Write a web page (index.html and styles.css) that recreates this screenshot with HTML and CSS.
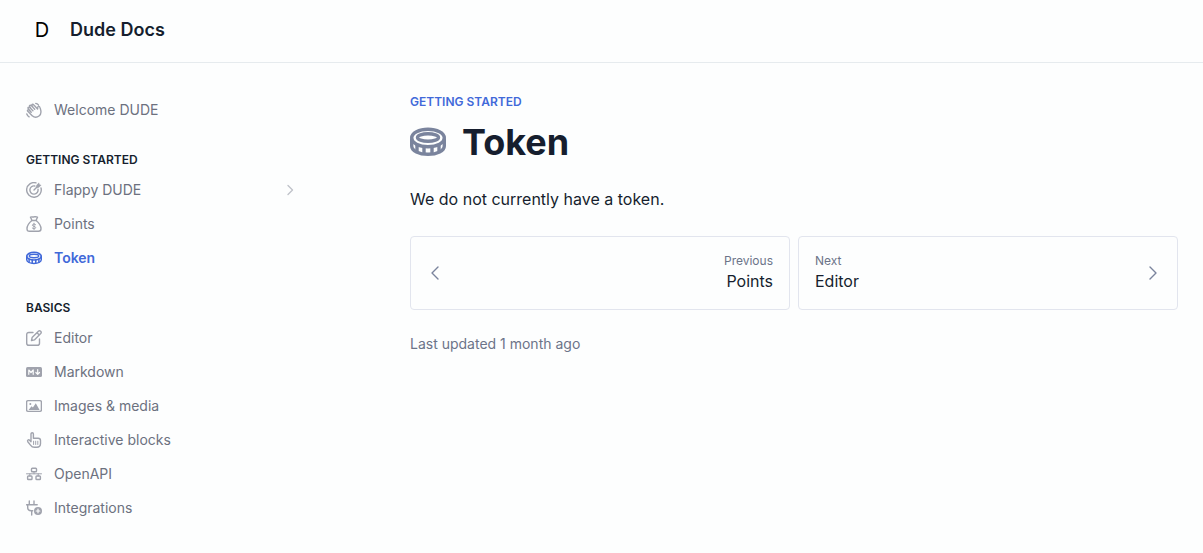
FILE: index.html
```html
<!DOCTYPE html>
<html lang="en">
<head>
    <meta charset="utf-8">
    <meta name="viewport" content="width=device-width, initial-scale=1">
    <title>Token - Dude Docs</title>
    <link rel="stylesheet" href="styles.css">
</head>
<body>
    <header class="header">
        <a class="brand" href="#">
            <span class="logo">D</span>
            <span class="brand-name">Dude Docs</span>
        </a>
    </header>

    <!-- shared by the sidebar and the page title -->
    <svg class="sprite" aria-hidden="true">
        <symbol id="coin" viewBox="0 0 36 36">
            <path d="M1.7 14.500v7.500c0 4.800 7.200 8.300 16.300 8.300s16.300-3.500 16.300-8.300v-7.500"/>
            <ellipse cx="18" cy="14" rx="16.300" ry="8.700"/>
            <ellipse cx="18" cy="13.500" rx="10.500" ry="3.700"/>
            <path d="M7 20v7M14 22.500v7M22 22.500v7M29 20v7"/>
        </symbol>
    </svg>

    <div class="layout">
        <nav class="sidebar">
            <ul>
                <li><a href="#">
                    <svg class="icon" viewBox="0 0 16 16"><path d="M6.200 13.800 1.800 9.300C1 8.400 2.100 7.300 3 8.100l2.200 2.200M5.200 10.300 2.300 6.700c-.8-1 .5-2.100 1.400-1.200l3.200 3.300M5.300 7.200 3.700 4.700c-.7-1.100.8-2 1.600-1.100l3.400 3.700M6.900 5.200 6 3.700C5.400 2.500 6.800 1.800 7.600 2.700l4 4.200c.2-1.200-.1-2.700 1-2.800 1.300-.1 1.500 1.800 2 3.500.8 2.800.2 5-1.600 6.400-2.100 1.600-4.800 1.500-6.800-.2M9.800 1.400c1.100.2 1.900.7 2.600 1.500M.8 12c.4 1.300 1.200 2.200 2.300 2.800"/></svg>
                    Welcome DUDE</a></li>
            </ul>

            <h2>Getting started</h2>
            <ul>
                <li><a href="#">
                    <svg class="icon" viewBox="0 0 16 16"><path d="M10 .9A7.300 7.300 0 1 0 15 6M8.800 4A4.100 4.100 0 1 0 12 7.200M8 8l3.500-3.500"/><path class="solid" d="M10.300 3.300 13 .5l.6 1.900 1.900.6-2.800 2.700-2.400.1z"/></svg>
                    Flappy DUDE
                    <svg class="icon toggle" viewBox="0 0 16 16"><path d="m6 3.500 4.500 4.500L6 12.500"/></svg></a></li>
                <li><a href="#">
                    <svg class="icon" viewBox="0 0 16 16"><path d="M5.500 4.500h5M6 4.500 4.500 1.200C6 .4 6.700 1.400 8 .9c1.300-.6 2.200 0 3.500.3L10 4.500c2.300 1.800 5 4.600 5 8.300 0 1.700-.8 2.500-2.500 2.500h-9C1.800 15.300 1 14.500 1 12.800c0-3.700 2.700-6.500 5-8.300z"/><path class="thin" d="M9.700 8.700C9 7.700 6.400 7.800 6.400 9.200c0 1.500 3.300.8 3.300 2.400 0 1.400-2.700 1.500-3.500.4M8 7.200v6.300"/></svg>
                    Points</a></li>
                <li><a class="active" href="#" aria-current="page">
                    <svg class="icon coin"><use href="#coin"/></svg>
                    Token</a></li>
            </ul>

            <h2>Basics</h2>
            <ul>
                <li><a href="#">
                    <svg class="icon" viewBox="0 0 16 16"><path d="M7 2.500H2.800C1.500 2.500.7 3.300.7 4.600v8.600c0 1.300.8 2.100 2.100 2.100h8.600c1.300 0 2.100-.8 2.100-2.100V9M5.500 10.500l.6-2.900 6.300-6.300c1.500-1.400 3.700.8 2.300 2.300L8.400 9.900zM11 2.700 13.300 5"/></svg>
                    Editor</a></li>
                <li><a href="#">
                    <svg class="icon" viewBox="0 0 16 16"><rect class="solid" x="0" y="3" width="16" height="10" rx="1.500"/><path class="cut" d="M2.800 10.300V6L5 8.500 7.200 6v4.300M11.700 5.700v4M9.900 8.500l1.800 1.800 1.800-1.800"/></svg>
                    Markdown</a></li>
                <li><a href="#">
                    <svg class="icon" viewBox="0 0 16 16"><rect x=".6" y="2.600" width="14.800" height="10.800" rx="1.500"/><circle class="solid" cx="4.300" cy="5.900" r="1"/><path class="solid" d="m2.600 11.900 2.900-3.600 1.400 1.300 2.900-4.400 3.800 6.700z"/></svg>
                    Images &amp; media</a></li>
                <li><a href="#">
                    <svg class="icon" viewBox="0 0 16 16"><path d="M5 9.700V2c0-1.700 2.400-1.700 2.400 0v4.300h4.800c1.500 0 2.300.9 2.300 2.300v3c0 2.400-1.300 3.700-3.700 3.700H8.500c-1.800 0-3-.7-4-2.200l-2.700-3.400c-.9-1.400.8-2.500 1.800-1.500L5 9.700"/><path class="thin" d="M7.600 9.200v3.300M9.700 9.200v3.300M11.800 9.200v3.300"/></svg>
                    Interactive blocks</a></li>
                <li><a href="#">
                    <svg class="icon" viewBox="0 0 16 16"><rect x="5.500" y="2.300" width="5" height="3.400" rx=".8"/><rect x="1.600" y="10" width="4.400" height="3.500" rx=".8"/><rect x="10" y="10" width="4.400" height="3.500" rx=".8"/><path class="thin" d="M8 5.700v2.100M.5 7.800h15M3.800 7.800V10M12.200 7.800V10"/></svg>
                    OpenAPI</a></li>
                <li><a href="#">
                    <svg class="icon" viewBox="0 0 16 16"><path d="M3.300 1v3.300M8 1v3.300M.6 4.700h10.600M1.700 4.700v2.800c0 2 1.400 3.200 3.400 3.200h1.600M5.700 10.700V15"/><circle class="solid" cx="12" cy="11" r="4"/><path class="cut" d="M12 9.200v3.600M10.200 11h3.600"/></svg>
                    Integrations</a></li>
            </ul>
        </nav>

        <main class="content">
            <p class="section">Getting started</p>
            <h1><svg class="coin" aria-hidden="true"><use href="#coin"/></svg>Token</h1>
            <p class="text">We do not currently have a token.</p>

            <div class="pager">
                <a class="card previous" href="#">
                    <svg class="icon" viewBox="0 0 16 16"><path d="M11 2 5 8l6 6"/></svg>
                    <span class="card-text"><span class="label">Previous</span>Points</span>
                </a>
                <a class="card" href="#">
                    <span class="card-text"><span class="label">Next</span>Editor</span>
                    <svg class="icon" viewBox="0 0 16 16"><path d="m5 2 6 6-6 6"/></svg>
                </a>
            </div>

            <p class="updated">Last updated 1 month ago</p>
        </main>
    </div>
</body>
</html>
```
FILE: styles.css
```css
* {
    box-sizing: border-box;
}

body {
    margin: 0;
    background: #fdfefe;
    color: #161e2e;
    font-family: Inter, sans-serif;
    font-size: 16px;
    line-height: 24px;
}

a {
    color: inherit;
    text-decoration: none;
}

h1, h2, p, ul {
    margin: 0;
    padding: 0;
}

ul {
    list-style: none;
}

svg {
    flex-shrink: 0;
    fill: none;
    stroke: currentColor;
}

.sprite {
    display: none;
}

.header {
    display: flex;
    align-items: center;
    height: 63px;
    padding: 0 26px 2px;
    border-bottom: 1px solid #e6ebee;
}

.brand {
    display: flex;
    align-items: center;
    gap: 12px;
}

.logo {
    width: 32px;
    color: #000;
    font-size: 20px;
    text-align: center;
}

.brand-name {
    font-size: 18px;
    font-weight: 600;
}

.layout {
    display: flex;
    gap: 104px;
    padding: 30px 25px 20px 26px;
}

.sidebar {
    width: 280px;
    flex-shrink: 0;
    color: #6c717f;
    font-size: 14px;
}

.sidebar h2 {
    margin-top: 20px;
    color: #161e2e;
    font-size: 12px;
    font-weight: 600;
    line-height: 26px;
    text-transform: uppercase;
}

.sidebar a {
    display: flex;
    align-items: center;
    gap: 12px;
    height: 34px;
}

.sidebar .active {
    color: #4169d9;
    font-weight: 600;
}

.icon {
    width: 16px;
    height: 16px;
    stroke-width: 1.4;
    stroke-linecap: round;
    stroke-linejoin: round;
}

.sidebar .icon {
    color: #a0a3ad;
}

.sidebar .active .icon {
    color: #4169d9;
}

.sidebar .toggle {
    margin-left: auto;
    margin-right: 8px;
    color: #c0c3ca;
}

.solid {
    fill: currentColor;
    stroke: none;
}

.thin {
    stroke-width: 1;
}

.cut {
    stroke: #fdfefe;
    stroke-width: 1.2;
}

.coin,
.icon.coin {
    stroke-width: 3.4;
}

.content {
    flex: 1;
    min-width: 0;
}

.section {
    color: #4169d9;
    font-size: 12px;
    font-weight: 600;
    line-height: 18px;
    text-transform: uppercase;
}

h1 {
    display: flex;
    align-items: center;
    gap: 16px;
    margin-top: 8px;
    font-size: 36px;
    font-weight: 700;
    line-height: 46px;
}

h1 .coin {
    width: 36px;
    height: 36px;
    color: #7a849d;
}

.text {
    margin-top: 22px;
}

.pager {
    display: grid;
    grid-template-columns: 1fr 1fr;
    gap: 8px;
    margin-top: 25px;
}

.card {
    display: flex;
    align-items: center;
    justify-content: space-between;
    padding: 16px;
    border: 1px solid #e2e5ee;
    border-radius: 4px;
}

.card .icon {
    color: #7a849d;
}

.card-text {
    line-height: 24px;
}

.previous .card-text {
    text-align: right;
}

.label {
    display: block;
    color: #6c7489;
    font-size: 12px;
    line-height: 16px;
}

.updated {
    margin-top: 22px;
    color: #6c7489;
    font-size: 14px;
}
```
